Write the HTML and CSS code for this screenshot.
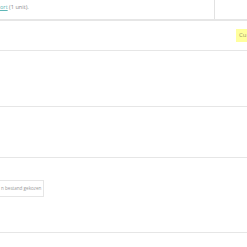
FILE: index.html
```html
<!DOCTYPE html>
<html>
<head>
<meta charset="utf-8">
<link rel="stylesheet" href="styles.css">
</head>
<body>
<div class="page">
  <div class="row r1">
    <div class="cell-main"><span class="txt"><a class="lnk" href="#">ort</a> (1 unit).</span></div>
    <div class="cell-side"></div>
  </div>
  <div class="row r2">
    <span class="badge">Cu</span>
  </div>
  <div class="row r3"></div>
  <div class="row r4"></div>
  <div class="row r5">
    <div class="filebox">n bestand gekozen</div>
  </div>
  <div class="row r6"></div>
</div>
</body>
</html>
```
FILE: styles.css
```css
html, body { margin: 0; padding: 0; background: #fff; }
body { font-family: "Open Sans", "Liberation Sans", sans-serif; overflow: hidden; width: 247px; height: 247px; }
.page { display: flex; flex-direction: column; }
.row { border-bottom: 1px solid #e6e6e6; box-sizing: border-box; }
.r1 { height: 21px; display: flex; border-bottom: 2px solid #e6e6e6; }
.cell-main { width: 215px; border-right: 1px solid #e2e2e2; display: flex; align-items: flex-start; padding-top: 4px; box-sizing: border-box; }
.txt { font-size: 5.6px; color: #8a8a8a; line-height: 7px; }
.lnk { color: #5fb7b7; text-decoration: underline; }
.cell-side { flex: 1; }
.r2 { height: 30px; display: flex; justify-content: flex-end; align-items: flex-start; padding-top: 8px; }
.badge { background: #ffff9e; color: #9a9a6a; font-size: 6px; line-height: 13px; height: 13px; width: 11px; padding-left: 3px; box-sizing: border-box; overflow: hidden; white-space: nowrap; }
.r3 { height: 56px; }
.r4 { height: 51px; }
.r5 { height: 75px; padding-top: 22px; }
.filebox { width: 44px; height: 17px; border: 1px solid #e6e6e6; border-left: none; box-sizing: border-box; font-size: 4.6px; color: #9a9a9a; line-height: 15px; padding-left: 1px; white-space: nowrap; overflow: hidden; }
.r6 { border-bottom: none; height: 15px; }
```
